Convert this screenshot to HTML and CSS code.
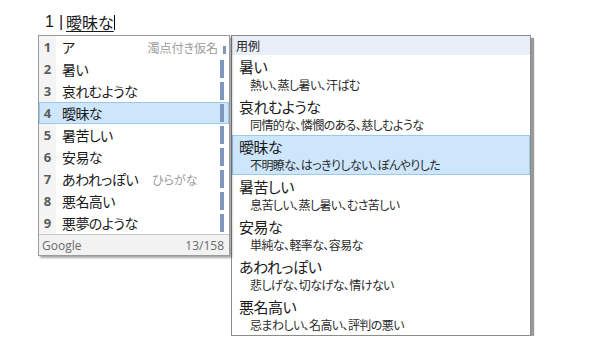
FILE: index.html
```html
<!DOCTYPE html>
<html lang="ja">
<head>
<meta charset="utf-8">
<link rel="stylesheet" href="styles.css">
</head>
<body>
<div class="input-line"><span class="num">1</span><span class="bar">|</span><span class="comp">曖昧な</span><span class="caret"></span></div>
<div class="popups">
  <div class="cand">
    <div class="rows">
      <div class="row"><span class="idx">1</span><span class="word">ア</span><span class="note right">濁点付き仮名</span><span class="sb sb-first"></span></div>
      <div class="row"><span class="idx">2</span><span class="word">暑い</span><span class="sb"></span></div>
      <div class="row"><span class="idx">3</span><span class="word">哀れむような</span><span class="sb"></span></div>
      <div class="row sel"><span class="idx">4</span><span class="word">曖昧な</span><span class="sb"></span></div>
      <div class="row"><span class="idx">5</span><span class="word">暑苦しい</span><span class="sb"></span></div>
      <div class="row"><span class="idx">6</span><span class="word">安易な</span><span class="sb"></span></div>
      <div class="row"><span class="idx">7</span><span class="word">あわれっぽい</span><span class="note">ひらがな</span><span class="sb"></span></div>
      <div class="row"><span class="idx">8</span><span class="word">悪名高い</span><span class="sb"></span></div>
      <div class="row"><span class="idx">9</span><span class="word">悪夢のような</span><span class="sb"></span></div>
    </div>
    <div class="foot"><span>Google</span><span>13/158</span></div>
  </div>
  <div class="preview">
    <div class="phead">用例</div>
    <div class="entry"><div class="t">暑い</div><div class="s">熱い、蒸し暑い、汗ばむ</div></div>
    <div class="entry"><div class="t">哀れむような</div><div class="s">同情的な、憐憫のある、慈しむような</div></div>
    <div class="entry sel"><div class="t">曖昧な</div><div class="s">不明瞭な、はっきりしない、ぼんやりした</div></div>
    <div class="entry"><div class="t">暑苦しい</div><div class="s">息苦しい、蒸し暑い、むさ苦しい</div></div>
    <div class="entry"><div class="t">安易な</div><div class="s">単純な、軽率な、容易な</div></div>
    <div class="entry"><div class="t">あわれっぽい</div><div class="s">悲しげな、切なげな、情けない</div></div>
    <div class="entry"><div class="t">悪名高い</div><div class="s">忌まわしい、名高い、評判の悪い</div></div>
  </div>
</div>
</body>
</html>
```
FILE: styles.css
```css
html, body {
  margin: 0;
  padding: 0;
  background: #fff;
  font-family: "Noto Sans CJK JP", "Noto Sans", sans-serif;
  font-feature-settings: "palt";
  color: #1a1a1a;
}
.input-line {
  height: 35px;
  box-sizing: border-box;
  padding: 12px 0 0 45px;
  font-size: 16px;
  line-height: 20px;
  display: flex;
  align-items: flex-start;
}
.input-line .num { margin-right: 5px; font-family: "Liberation Sans", sans-serif; }
.input-line .bar { margin-right: 3px; font-family: "Liberation Sans", sans-serif; font-weight: 300; }
.input-line .comp {
  text-decoration: underline;
  text-decoration-thickness: 1px;
  text-underline-offset: 2px;
}
.input-line .caret {
  width: 1px;
  height: 15px;
  margin-top: 3px;
  background: #000;
}
.popups {
  display: flex;
  align-items: flex-start;
  padding-left: 38px;
}
.cand {
  width: 192px;
  box-sizing: border-box;
  border: 1px solid #9a9a9a;
  background: #fff;
  box-shadow: 2px 2px 2px rgba(0,0,0,0.35);
  position: relative;
  z-index: 1;
}
.row {
  height: 22px;
  display: flex;
  align-items: center;
  position: relative;
  font-size: 14px;
  box-sizing: border-box;
}
.idx {
  width: 17px;
  height: 100%;
  background: #f4f4f4;
  display: flex;
  align-items: center;
  justify-content: center;
  font-family: "Open Sans", "Noto Sans", sans-serif;
  font-weight: 700;
  font-size: 13px;
  color: #5c5c5c;
  margin-right: 6px;
}
.word { white-space: nowrap; letter-spacing: -0.6px; }
.note {
  font-size: 12px;
  color: #9a9a9a;
  margin-left: 14px;
}
.note.right { margin-left: auto; margin-right: 11px; }
.sb {
  position: absolute;
  right: 5px;
  top: 2px;
  bottom: 2px;
  width: 4px;
  background: #7f97bd;
}
.sb.sb-first {
  right: 3px;
  top: 10px;
  bottom: 4px;
  width: 3px;
}
.row.sel {
  background: #cde6fb;
  outline: 1px solid #9cc8ec;
  outline-offset: -1px;
}
.row.sel .idx { background: transparent; }
.foot {
  height: 20px;
  border-top: 1px solid #c9c9c9;
  background: #f2f2f2;
  display: flex;
  justify-content: space-between;
  align-items: center;
  padding: 0 5px 0 3px;
  font-family: "Open Sans", "Noto Sans", sans-serif;
  font-size: 12px;
  color: #6b6b6b;
}
.preview {
  width: 300px;
  margin-left: 1px;
  box-sizing: border-box;
  border: 1px solid #8c8c8c;
  background: #fff;
  box-shadow: 3px 3px 1px rgba(0,0,0,0.4);
}
.phead {
  height: 19px;
  background: #e9eef8;
  font-size: 12px;
  line-height: 19px;
  padding-left: 4px;
  color: #222;
}
.entry {
  height: 40px;
  box-sizing: border-box;
  padding: 2px 0 0 7px;
}
.entry .t {
  font-size: 15px;
  line-height: 20px;
  letter-spacing: -0.5px;
}
.entry .s {
  font-size: 12px;
  line-height: 16px;
  padding-left: 11px;
  color: #2a2a2a;
  letter-spacing: -0.6px;
}
.entry.sel {
  background: #cde6fb;
  outline: 1px solid #9cc8ec;
  outline-offset: -1px;
}
```
